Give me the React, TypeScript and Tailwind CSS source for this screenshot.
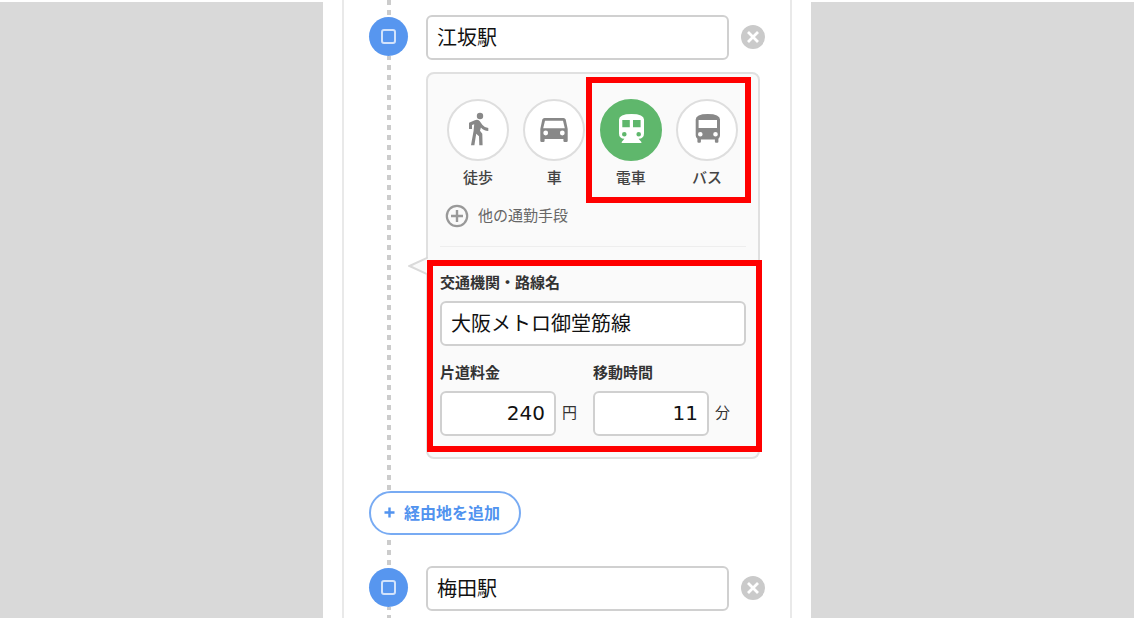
import React, { useState } from 'react';
import clsx from 'clsx';

interface Transport {
  id: string;
  label: string;
  icon: React.ReactNode;
}

// 36x36 icons, holes are cut with evenodd
const TRANSPORTS: Transport[] = [
  {
    id: 'walk',
    label: '徒歩',
    icon: (
      <>
        <circle cx="20" cy="4" r="3.2" />
        <path d="M9 17V10.7L14.8 8.2Q17.8 7.2 19.6 9L22.5 13Q24.5 15.6 28.3 16V19Q23.6 18.8 20.9 15.5L20 18.8L22.3 21.8L22.6 33.3H19.3L19 24.3L16.2 21.7L14.4 33.3H11L13.6 18.8L14.2 12.2L12 13.1V17Z" />
      </>
    ),
  },
  {
    id: 'car',
    label: '車',
    icon: (
      <path d="M8.5 6H27.5Q29.2 6 29.7 7.6L31.7 17V28.8Q31.7 30 30.5 30H28.6Q27.4 30 27.4 28.8V27H8.6V28.8Q8.6 30 7.4 30H5.5Q4.3 30 4.3 28.8V17L6.3 7.6Q6.8 6 8.5 6ZM9 8.7L7.2 16.3H28.8L27 8.7ZM7.3 21a2.4 2.4 0 1 0 4.8 0a2.4 2.4 0 1 0-4.8 0ZM23.9 21a2.4 2.4 0 1 0 4.8 0a2.4 2.4 0 1 0-4.8 0Z" />
    ),
  },
  {
    id: 'train',
    label: '電車',
    icon: (
      <path d="M18.5 2Q31 2 31 7.6V21.5Q31 26.6 25.6 26.8L28.4 30V30.9H8.7V30L11.4 26.8Q6 26.6 6 21.5V7.6Q6 2 18.5 2ZM9.3 8V15.3H16.8V8ZM20 8V15.3H27.6V8ZM9 22.3a2.3 2.3 0 1 0 4.6 0a2.3 2.3 0 1 0-4.6 0ZM23.4 22.3a2.3 2.3 0 1 0 4.6 0a2.3 2.3 0 1 0-4.6 0Z" />
    ),
  },
  {
    id: 'bus',
    label: 'バス',
    icon: (
      <path d="M18.8 2Q31 2 31 7.6V23.5Q31 25.4 29.4 26.8V29.7Q29.4 30.8 28.3 30.8H27Q25.9 30.8 25.9 29.7V27.4H11.9V29.7Q11.9 30.8 10.8 30.8H9.5Q8.4 30.8 8.4 29.7V26.8Q6.7 25.4 6.7 23.5V7.6Q6.7 2 18.8 2ZM9.6 8V16H28V8ZM9 22.3a2.3 2.3 0 1 0 4.6 0a2.3 2.3 0 1 0-4.6 0ZM24.2 22.3a2.3 2.3 0 1 0 4.6 0a2.3 2.3 0 1 0-4.6 0Z" />
    ),
  },
];

const INPUT = 'h-[45px] min-w-0 rounded-md border-2 border-[#d0d0d0] bg-white px-[9px] pb-[2px] text-[20px] text-[#111] outline-none';
const NUMBER_INPUT = 'text-right font-[DejaVu_Sans,sans-serif]';

const Dots: React.FC<{ className: string }> = ({ className }) => (
  <div
    className={clsx(
      'w-1 bg-[linear-gradient(#cccccc_5px,transparent_5px)] bg-[length:4px_10px] bg-repeat-y',
      className
    )}
  />
);

const StopMarker: React.FC = () => (
  <div className="flex size-[39px] shrink-0 items-center justify-center rounded-full bg-[#5796ef]">
    <div className="size-[15px] rounded-[3px] border-2 border-[#d3e3fb]" />
  </div>
);

const StationRow: React.FC<{ label: string; defaultValue: string }> = ({ label, defaultValue }) => (
  <div className="flex items-center gap-3">
    <input aria-label={label} defaultValue={defaultValue} className={clsx(INPUT, 'flex-1')} />
    <button type="button" aria-label="削除" className="shrink-0 pb-[2px]">
      <svg viewBox="0 0 24 24" className="size-6">
        <circle cx="12" cy="12" r="12" fill="#cacaca" />
        <path d="M7 7l10 10M17 7l-10 10" stroke="#fff" strokeWidth="2.8" />
      </svg>
    </button>
  </div>
);

const RoutePanel: React.FC = () => {
  const [selected, setSelected] = useState('train');

  return (
    <div className="relative mt-3 mr-[5px] rounded-lg border-2 border-[#e0e0e0] bg-[#fafafa] px-3 pt-[25px] pb-[21px]">
      {/* speech bubble tail pointing at the route line */}
      <svg viewBox="0 0 20 18" className="absolute top-[183px] -left-5 h-[18px] w-5">
        <path d="M20 0.5L1.5 9L20 17.5" fill="#fafafa" stroke="#dadada" strokeWidth="2" />
      </svg>

      <div className="flex justify-between pr-2 pl-[7px]">
        {TRANSPORTS.map(({ id, label, icon }) => (
          <button key={id} type="button" onClick={() => setSelected(id)} className="flex flex-col items-center gap-[5px]">
            <span
              className={clsx(
                'flex size-[62px] items-center justify-center rounded-full border-2',
                selected === id ? 'border-[#5fb76c] bg-[#5fb76c] text-white' : 'border-[#dedede] bg-white text-[#888]'
              )}
            >
              <svg viewBox="0 0 36 36" className="size-9 shrink-0" fill="currentColor" fillRule="evenodd">
                {icon}
              </svg>
            </span>
            <span className="text-[15px] leading-[22px] font-medium text-[#444]">{label}</span>
          </button>
        ))}
      </div>

      <button type="button" className="mt-4 ml-[5px] flex h-6 items-center gap-[9px] text-[15px] leading-[22px] text-[#666]">
        <svg viewBox="0 0 24 24" className="size-6" fill="none" stroke="#999">
          <circle cx="12" cy="12" r="10.2" strokeWidth="2.2" />
          <path d="M12 6v12M6 12h12" strokeWidth="2.4" />
        </svg>
        <span className="pb-[2px]">他の通勤手段</span>
      </button>

      <hr className="mt-[18px] border-[#eee]" />

      <div className="relative mt-6 text-[15px] leading-[22px] text-[#333]">
        <label htmlFor="line" className="block font-bold">交通機関・路線名</label>
        <input id="line" defaultValue="大阪メトロ御堂筋線" className={clsx(INPUT, 'mt-2 block w-full')} />
        <div className="mt-[15px] grid grid-cols-2">
          <div>
            <label htmlFor="fare" className="block font-bold">片道料金</label>
            <div className="mt-2 flex items-center gap-[6px]">
              <input id="fare" defaultValue="240" className={clsx(INPUT, NUMBER_INPUT, 'w-[116px]')} />
              <span className="pb-1">円</span>
            </div>
          </div>
          <div>
            <label htmlFor="minutes" className="block font-bold">移動時間</label>
            <div className="mt-2 flex items-center gap-[6px]">
              <input id="minutes" defaultValue="11" className={clsx(INPUT, NUMBER_INPUT, 'w-[116px]')} />
              <span className="pb-1">分</span>
            </div>
          </div>
        </div>
        <div className="pointer-events-none absolute -top-[11px] -right-4 -bottom-4 -left-[13px] border-6 border-[#ff0000]" />
      </div>

      <div className="pointer-events-none absolute top-[3px] right-[7px] h-[126px] w-[165px] border-6 border-[#ff0000]" />
    </div>
  );
};

export default function App() {
  return (
    <div className="flex h-screen overflow-hidden bg-white font-[Noto_Sans_CJK_JP,sans-serif]">
      <div className="mt-[2px] flex-1 bg-[#d9d9d9]" />
      <main className="w-full max-w-[488px] shrink-0 px-[19px]">
        <div className="min-h-full border-x-2 border-[#e9e9e9] px-[25px]">
          <section className="flex gap-[18px]">
            <div className="flex flex-col items-center">
              <Dots className="h-[17px]" />
              <StopMarker />
              <Dots className="flex-1 bg-[position:0_-1px]" />
            </div>
            <div className="min-w-0 flex-1 pt-[15px] pb-8">
              <StationRow label="経由駅" defaultValue="江坂駅" />
              <RoutePanel />
            </div>
          </section>

          <button
            type="button"
            className="flex h-11 items-center gap-[9px] rounded-full border-2 border-[#78abf3] bg-white pr-[19px] pb-[2px] pl-[13px] text-[16px] leading-[22px] font-bold text-[#5193ef]"
          >
            <svg viewBox="0 0 11 11" className="size-[11px]" stroke="currentColor" strokeWidth="2.4">
              <path d="M5.5 0.5v10M0.5 5.5h10" />
            </svg>
            経由地を追加
          </button>

          <section className="flex gap-[18px]">
            <div className="flex flex-col items-center">
              <Dots className="h-[33px] bg-[position:0_5px]" />
              <StopMarker />
              <Dots className="flex-1 bg-[position:0_-2px]" />
            </div>
            <div className="min-w-0 flex-1 pt-[31px] pb-8">
              <StationRow label="到着駅" defaultValue="梅田駅" />
            </div>
          </section>
        </div>
      </main>
      <div className="mt-[2px] flex-1 bg-[#d9d9d9]" />
    </div>
  );
}
